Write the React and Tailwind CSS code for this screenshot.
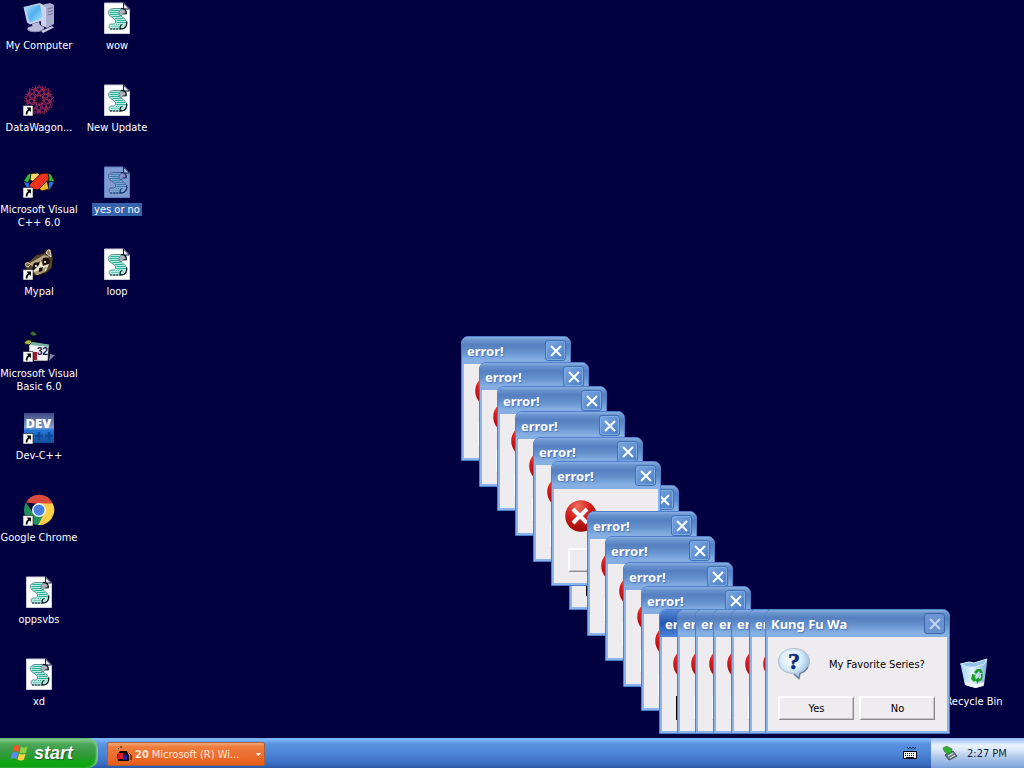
import React from "react";

function ScriptIcon({ selected }) {
  const paper = selected ? "#7f9bd0" : "#ffffff";
  const edge = selected ? "#5f7fc0" : "#c9ced8";
  const teal = selected ? "#3c79ab" : "#2fae98";
  const pale = selected ? "#83a8d6" : "#b4ece0";
  const ink = selected ? "#2c4a86" : "#3c7680";
  const shade = selected ? "#16306e" : "#061418";
  return (
    <svg viewBox="0 0 32 32" className="size-8 shrink-0" aria-hidden="true">
      <path d="M3.500 1H22.500l6 6v24.500h-25z" fill={paper} stroke={edge} />
      <path d="M22.500 1V7h6z" fill={selected ? "#a4bbe4" : "#e8ebf2"} stroke="#10183c" />
      <path d="M21 6.500H13C9 6.500 7 8.500 7.500 11.500c.6 3.500 6 4 7 7 .6 2-.5 3.500-2 3.500H10c-2.500 0-2.500 5 0 5H20c5 0 6.500-4 5.500-7.500C24.500 16 19 14.500 18.500 11.500z" fill={pale} stroke={ink} strokeWidth=".8" />
      <path d="M9.500 8.500H18M8.500 10.500H17.500M9 12.500H18M11.500 14.500H19.500M14 16.500H22M15.500 18.500H24M15.500 20.500H25" stroke={teal} strokeWidth="1.200" />
      <path d="M18 12.500C17.500 9 19 7 21.500 7c2.500 0 3.500 2 3.500 4.500-2-.5-4 .5-5 2.500z" fill={selected ? "#8493c4" : "#b0b0ba"} stroke={ink} strokeWidth=".8" />
      <path d="M20 6.300c4 0 5.600 2 5.300 5.500l-3 .2" fill="none" stroke={shade} strokeWidth="1.200" />
      <path d="M10.500 24.500h8M15 22.500h4" fill="none" stroke={teal} strokeDasharray="1 1" />
      <path d="M25.700 19.500c.6 4-1.500 7-5 7.500-2.500-.5-2-4.500.8-4.500" fill="none" stroke={shade} strokeWidth="1.200" />
      <path d="M9 27h11" stroke={shade} strokeDasharray="2 1" strokeWidth=".9" />
    </svg>
  );
}

function ShortcutArrow() {
  return (
    <g>
      <path d="M0 21.500h10V32H0z" fill="#fff" stroke="#111" strokeWidth=".6" />
      <path d="M3.500 23.500H8V28L6.500 26.600C5 27.600 4.500 28.600 4.500 30.500H2.800C2.600 28 3.500 26.400 5.200 25.200z" fill="#000" />
    </g>
  );
}

function ComputerIcon() {
  return (
    <svg viewBox="0 0 32 32" className="size-8 shrink-0" aria-hidden="true">
      <defs>
        <linearGradient id="screen" x1="0" y1="0" x2="1" y2="1">
          <stop offset="0" stopColor="#a4e2fc" />
          <stop offset=".5" stopColor="#4fb0ee" />
          <stop offset="1" stopColor="#b4e6ff" />
        </linearGradient>
      </defs>
      <path d="M18 3l9-2 4 2v19l-7 4-6-3z" fill="#a9acd0" />
      <path d="M18 3l5 2v20l-5-2z" fill="#d0d2ea" />
      <path d="M24.500 7l5.500-1.500M24.500 10l5.500-1.500M24.500 13l5.500-1.500" stroke="#6c7098" />
      <path d="M26 19h2" stroke="#70d070" strokeWidth="1.500" />
      <path d="M.5 5L17 1l3 2 1.500 15L7 22.500l-3-2z" fill="#c8d2ea" />
      <path d="M2.500 5.500L17 2.500l2.500 14L6.500 20.500z" fill="url(#screen)" />
      <path d="M9 22l7-2 1 3 4 2c1 3-5 5.500-10 5-6-.5-8.500-3-5-5l3.500-1z" fill="#b9bcdc" />
      <path d="M4.500 27.500c3 3 12 3 16-.5" fill="none" stroke="#8286b4" />
      <path d="M18 29l11-5 2 1.500L20 31z" fill="#c8cae2" />
    </svg>
  );
}

function DataWagonIcon() {
  return (
    <svg viewBox="0 0 32 32" className="size-8 shrink-0" aria-hidden="true">
      <g fill="none" stroke="#8e2350" strokeWidth=".9">
        {[0, 40, 80, 120, 160, 200, 240, 280, 320].map((angle) => (
          <g key={angle} transform={`rotate(${angle} 16 16)`}>
            <ellipse cx="16" cy="7.500" rx="5.500" ry="4" />
            <path d="M16 1l5 8-5 5-5-5z" />
            <path d="M9 3l7 5 7-5" />
          </g>
        ))}
      </g>
      <circle cx="16" cy="16" r="3" fill="#15042e" />
      <circle cx="16" cy="16" r="5" fill="none" stroke="#c03a4a" strokeDasharray="1 2" />
      <ShortcutArrow />
    </svg>
  );
}

function VisualCIcon() {
  return (
    <svg viewBox="0 0 32 32" className="size-8 shrink-0" aria-hidden="true">
      <g stroke="#050505" strokeWidth=".8">
        <path d="M.5 16L4 10l4 1-2 5 2 6-4 1z" fill="#2f6ae8" />
        <path d="M.5 15L5 8l5-1v5l-3 1-2 4z" fill="#30b43c" />
        <path d="M8 7.500l7-.5 2 2-6 7-4-2z" fill="#f8d469" />
        <path d="M31.500 15L28 8l-5-1v4l3 5-2 6 4 1z" fill="#32b83a" />
        <path d="M31.500 16L27 24l-5 1 3-5 1-5z" fill="#316ce4" />
        <path d="M24 15l2 8-7 2-4-3z" fill="#f2b832" />
        <path d="M6 19L18 7.500l7-.5 1 6-11 11-7-1z" fill="#ea321d" />
      </g>
      <ShortcutArrow />
    </svg>
  );
}

function MypalIcon() {
  return (
    <svg viewBox="0 0 32 32" className="size-8 shrink-0" aria-hidden="true">
      <path d="M2 14l5-1 6-6 8-2 3-4 4 1 2 8-1 10-6 5-9 3-9-3-3-7z" fill="#514231" stroke="#1c130d" />
      <path d="M23 5l2-3h2l1 7z" fill="#8b7360" stroke="#e8decb" />
      <path d="M3 18c-2-3 1-4 5-2l-3 3z" fill="#7a6349" stroke="#ead9b8" />
      <path d="M7 15l7-4 7-4 6 2-7 2-7 5-3 5z" fill="#b5a484" />
      <path d="M11 15c5-2 6 0 5 4l-4 4-4-1z" fill="#18110d" />
      <path d="M20 10c6-2 8 2 6 6l-6 1z" fill="#18110d" />
      <path d="M10 23l6-6 2-5 2 6 6-2-3 7-9 4z" fill="#eee4ca" />
      <path d="M11 24l8-3 5-3-3 6-7 3z" fill="#a89674" />
      <path d="M16 20l4-1-1 4-3 1z" fill="#060505" />
      <circle cx="13" cy="18" r="1" fill="#fff" />
      <circle cx="22" cy="14" r="1" fill="#fff" />
      <ShortcutArrow />
    </svg>
  );
}

function VisualBasicIcon() {
  return (
    <svg viewBox="0 0 32 32" className="size-8 shrink-0" aria-hidden="true">
      <path d="M7 3c3-3 6-1 7 2-3 2-6 1-7-2z" fill="#3c6c3c" stroke="#0b1510" />
      <path d="M1 13c2-4 7-4 8-1-2 4-5 3-8 1z" fill="#a9b04c" stroke="#161b08" />
      <path d="M10 8l3 4M7 15l4 3" stroke="#000" strokeWidth="2" />
      <path d="M6 15l3-3 17 3-1 16H11l-5-5z" fill="#f2f3fa" stroke="#000" strokeWidth=".6" />
      <path d="M9 12l17 2.500V17L7 15z" fill="#72b5a5" />
      <path d="M10 22h4v8h-4z" fill="#991e32" />
      <path d="M26 31l6-6-5-1z" fill="#7c83a1" />
      <text x="14" y="25" fontFamily="Liberation Sans, sans-serif" fontWeight="700" fontSize="10" fill="#10144c">32</text>
      <ShortcutArrow />
    </svg>
  );
}

function DevIcon() {
  return (
    <svg viewBox="0 0 32 32" className="size-8 shrink-0" aria-hidden="true">
      <defs>
        <linearGradient id="dev" x1="0" y1="0" x2="0" y2="1">
          <stop offset="0" stopColor="#3c4880" />
          <stop offset=".48" stopColor="#8a9cc8" />
          <stop offset=".58" stopColor="#2278d8" />
          <stop offset="1" stopColor="#114e9c" />
        </linearGradient>
      </defs>
      <path d="M1 1h30v30H1z" fill="url(#dev)" />
      <text x="2.500" y="15.500" fontFamily="Open Sans, sans-serif" fontWeight="800" fontSize="13" fill="#fff">DEV</text>
      <path d="M12 24h8m-4-4v8M22 24h8m-4-4v8" stroke="#0d4a9c" strokeWidth="2.500" />
      <ShortcutArrow />
    </svg>
  );
}

function ChromeIcon() {
  return (
    <svg viewBox="0 0 32 32" className="size-8 shrink-0" aria-hidden="true">
      <path d="M3 8.500A15 15 0 0 1 30 10H16z" fill="#dc4a3d" />
      <path d="M3 8.500A15 15 0 0 0 15 31L22 19 11 20z" fill="#23905c" />
      <path d="M29.700 9.500A15 15 0 0 1 15 31L22 18 18 9.500z" fill="#fcce45" />
      <circle cx="16" cy="16" r="7" fill="#f3f5f8" />
      <circle cx="16" cy="16" r="5.500" fill="#4a7fe0" />
      <ShortcutArrow />
    </svg>
  );
}

function RecycleIcon() {
  return (
    <svg viewBox="0 0 32 32" className="size-8 shrink-0" aria-hidden="true">
      <defs>
        <linearGradient id="bin" x1="0" y1="0" x2="1" y2="0">
          <stop offset="0" stopColor="#a4d0f0" />
          <stop offset=".45" stopColor="#e2f2fc" />
          <stop offset="1" stopColor="#7eb0e0" />
        </linearGradient>
      </defs>
      <path d="M2.500 6L11 4l5 1L29 1v4l-3 22-8 3-11-3z" fill="url(#bin)" />
      <path d="M2.500 6L11 4l5 1L29 1l-3 5-9 3-8 0z" fill="#8fc0ea" stroke="#d6eefc" />
      <path d="M6 23l10 3 10-2-.5 4-8 2-9-2.500z" fill="#f2f9fd" />
      <g fill="#1c9c28" transform="translate(-1 -1)">
        <path d="M17 15l3-3h4l2 4h-3l-1-2-3 3z" />
        <path d="M26 17l-1 6-4 2v2l-3-4 4-3v2l2-1v-4z" />
        <path d="M15 17l4 1-1 1 1 4-2 2-3-3 1-3z" />
      </g>
    </svg>
  );
}

function DesktopIcon({ label, icon, selected }) {
  return (
    <button type="button" className="flex h-[82px] w-[78px] shrink-0 flex-col items-center gap-[5px] pt-[2px] text-center text-[11px] leading-[13px] text-white">
      {icon}
      <span className={selected ? "bg-[#3562ab] px-[2px] whitespace-nowrap" : "whitespace-pre"}>{label}</span>
    </button>
  );
}

function ErrorIcon() {
  return (
    <svg viewBox="0 0 32 32" className="size-8 shrink-0" aria-hidden="true">
      <defs>
        <radialGradient id="err" cx=".4" cy=".2" r=".9">
          <stop offset="0" stopColor="#f0705c" />
          <stop offset=".45" stopColor="#d01c1c" />
          <stop offset="1" stopColor="#8c0808" />
        </radialGradient>
      </defs>
      <circle cx="16" cy="16" r="15.800" fill="url(#err)" />
      <path d="M8 9l14 14M22 9L8 23" stroke="#fff" strokeWidth="4" />
    </svg>
  );
}

function QuestionIcon() {
  return (
    <svg viewBox="0 0 32 32" className="size-8 shrink-0" aria-hidden="true">
      <defs>
        <radialGradient id="bubble" cx=".42" cy=".35" r=".65">
          <stop offset="0" stopColor="#fff" />
          <stop offset=".5" stopColor="#dceefa" />
          <stop offset="1" stopColor="#8cb4da" />
        </radialGradient>
      </defs>
      <path d="M16 .5c9 0 15.500 5.500 15.500 13 0 5.500-4 10-9.500 11.500L20.500 31l-6-5.500C6 25 .5 20 .5 13.500.5 6 7 .5 16 .5z" fill="url(#bubble)" stroke="#a3b4c8" strokeWidth=".8" />
      <path d="M30 19c-2 4-5 5.500-8 6.500l-1 5-5-4.500" fill="none" stroke="#6d7c90" strokeWidth="1.300" />
      <text x="10" y="21" fontFamily="Liberation Serif, serif" fontWeight="700" fontSize="24" fill="#0e2c80" stroke="#0e2c80" strokeWidth=".6">?</text>
    </svg>
  );
}

function CloseButton({ faded }) {
  return (
    <button
      type="button"
      aria-label="Close"
      className={
        faded
          ? "grid size-[21px] shrink-0 place-items-center rounded-[3px] border border-[#3d64a5] bg-linear-to-br from-[#7096d4] to-[#6690d0] text-[#c0d6f4]"
          : "grid size-[21px] shrink-0 place-items-center rounded-[3px] border border-[#3f70b4] bg-linear-to-br from-[#7aa6e0] to-[#4a7fc6] text-white shadow-[inset_0_0_0_1px_#7fabe4]"
      }
    >
      <svg viewBox="0 0 12 12" className="size-3" aria-hidden="true">
        <path d="M1 1l10 10M11 1L1 11" stroke="currentColor" strokeWidth="2" />
      </svg>
    </button>
  );
}

function DialogWindow({ title, x, y, width, active, faded, children }) {
  return (
    <section
      role="dialog"
      aria-label={title}
      style={{ left: x, top: y, width }}
      className="absolute flex h-[125px] flex-col overflow-hidden rounded-t-[7px] border border-[#4f7fcb] bg-[#8ab4ea] px-[2px] pb-[2px]"
    >
      <header
        className={
          active
            ? "-mx-[2px] flex h-[27px] shrink-0 items-center justify-between bg-linear-to-b from-[#5687d6] via-[#2657ae] to-[#4c86dc] pr-[4px] pl-[5px]"
            : "-mx-[2px] flex h-[27px] shrink-0 items-center justify-between bg-[linear-gradient(#8ab0e4_0px,#6a94d0_3px,#557fbf_8px,#6490cc_15px,#86b0e4_23px,#84aee2_27px)] pr-[4px] pl-[5px]"
        }
      >
        <h2 className="font-['Noto_Sans','Open_Sans',sans-serif] text-[13px] leading-4 font-bold whitespace-nowrap text-white [text-shadow:1px_1px_1px_#4a74b4]">{title}</h2>
        <CloseButton faded={faded} />
      </header>
      <div className="min-h-0 flex-1 bg-[#eeecee]">{children}</div>
    </section>
  );
}

function PushButton({ children, focused }) {
  return (
    <button
      type="button"
      className={
        focused
          ? "h-6 w-[76px] shrink-0 border border-black bg-[#eeecee] text-[11px] text-black"
          : "h-6 w-[76px] shrink-0 border-t-2 border-r border-b border-l-2 border-t-white border-r-[#8a8a8a] border-b-[#8a8a8a] border-l-white bg-[#eeecee] text-[11px] leading-[13px] text-black shadow-[inset_-1px_-1px_0_#c6c4c6]"
      }
    >
      {children}
    </button>
  );
}

function ErrorDialog({ x, y, active, focused }) {
  return (
    <DialogWindow title="error!" x={x} y={y} width={110} active={active}>
      <div className="flex flex-col gap-[16px] pt-[11px] pl-[11px]">
        <ErrorIcon />
        <div className="flex pl-[3px]">
          <PushButton focused={focused}>OK</PushButton>
        </div>
      </div>
    </DialogWindow>
  );
}

const errorDialogs = [
  { x: 461, y: 336 },
  { x: 479, y: 362 },
  { x: 497, y: 386 },
  { x: 515, y: 411 },
  { x: 533, y: 437 },
  { x: 569, y: 485, focused: true },
  { x: 551, y: 461 },
  { x: 587, y: 511 },
  { x: 605, y: 536 },
  { x: 623, y: 562 },
  { x: 641, y: 586 },
  { x: 659, y: 609, active: true, focused: true },
  { x: 677, y: 609 },
  { x: 695, y: 609 },
  { x: 713, y: 609 },
  { x: 731, y: 609 },
  { x: 749, y: 609 },
];

function StartFlag() {
  return (
    <svg viewBox="0 0 20 20" className="size-5 shrink-0" aria-hidden="true">
      <path d="M4 3c2-1.500 4-1.500 6 0L8.500 9C6.500 7.500 4.500 7.500 2.500 9z" fill="#ea5a2c" />
      <path d="M11 3.500c2 1.300 4 1.300 6.500 0L16 9.500c-2.500 1.300-4.500 1.300-6.500 0z" fill="#8cd044" />
      <path d="M2.200 10c2-1.500 4-1.500 6 0l-1.700 6C4.500 14.500 2.500 14.500.5 16z" fill="#5b8cf0" />
      <path d="M9.200 10.500c2 1.300 4 1.300 6.500 0l-1.700 6c-2.500 1.300-4.500 1.300-6.500 0z" fill="#fbd13c" />
    </svg>
  );
}

function Taskbar() {
  return (
    <footer className="flex h-[30px] shrink-0 bg-[linear-gradient(#74b2f6_0px,#78b4f6_2px,#5a92e0_6px,#4c84d6_16px,#3a6cc0_26px,#2c57a8_30px)]">
      <button type="button" className="flex w-[98px] shrink-0 items-center gap-[4px] rounded-r-[10px] bg-[linear-gradient(#5cae6c_0px,#7cc884_2px,#4ca858_6px,#3c9c48_12px,#2a9a30_19px,#12a814_24px,#0ca00e_30px)] pl-[10px] text-white shadow-[inset_-2px_0_2px_#7ec98a]">
        <StartFlag />
        <span className="font-['Liberation_Sans',sans-serif] text-[18px] leading-5 font-bold italic [text-shadow:1px_1px_1px_#1d5a22]">start</span>
      </button>
      <button type="button" className="mt-1 ml-[9px] flex h-6 w-[158px] shrink-0 items-center gap-[3px] rounded-[2px] border border-[#a8603c] bg-[linear-gradient(#f4a874_0px,#ee7c3c_4px,#ec7030_12px,#e65c18_22px)] pr-[3px] pl-[8px] text-[11px] leading-[13px] text-[#fde6d6]">
        <svg viewBox="0 0 16 16" className="size-4 shrink-0" aria-hidden="true">
          <path d="M5 0v2M2 2l1 1" stroke="#201008" />
          <path d="M1 9l3-4h7l2 5v5H2z" fill="#120808" />
          <path d="M2 7h5v6H2z" fill="#d8202c" />
          <path d="M7 9h4v5H7z" fill="#2820a0" />
          <path d="M13 7l2 2v5" stroke="#111" fill="none" />
        </svg>
        <b>20</b>
        <span className="min-w-0 flex-1 text-left whitespace-nowrap">Microsoft (R) Wi...</span>
        <svg viewBox="0 0 5 3" className="h-[3px] w-[5px] shrink-0" aria-hidden="true">
          <path d="M0 0h5L2.500 3z" fill="#fff" />
        </svg>
      </button>
      <div className="ml-auto flex items-center pr-[14px]">
        <svg viewBox="0 0 14 14" className="size-[14px]" aria-hidden="true">
          <path d="M4 1.500l1.500 1L7 1.500l1.500 1 1.500-1 1.500 1L13 1.500" fill="none" stroke="#1c2840" />
          <path d="M.5 5.500h13v7H.5z" fill="#fff" stroke="#000" />
          <path d="M2 7.500h10M2 9.500h10" stroke="#000" strokeDasharray="1 1" />
          <path d="M3 11.500h8" stroke="#000" />
        </svg>
      </div>
      <div className="flex w-[93px] shrink-0 items-center gap-[9px] bg-[linear-gradient(#8fbcf6_0px,#b4d0f6_3px,#e9f1fc_7px,#dce8f8_12px,#b0c8ea_19px,#8fb1e2_26px,#7c9fd6_30px)] pl-[11px] text-[11px] leading-[13px] text-[#101c3c]">
        <svg viewBox="0 0 16 16" className="size-4 shrink-0" aria-hidden="true">
          <path d="M3 10l8-4 4 5-8 4z" fill="#75808c" stroke="#3c4854" />
          <path d="M6 11l5-3M8 13l5-3" stroke="#e8eef4" />
          <path d="M1 3l4-2 1 1 4 2-1 4-4 1-3-3z" fill="#37ae35" stroke="#1c7a24" strokeWidth=".6" />
        </svg>
        <time>2:27 PM</time>
      </div>
    </footer>
  );
}

export default function App() {
  return (
    <div className="flex min-h-screen flex-col overflow-hidden bg-[#000040] font-['DejaVu_Sans_Condensed','Noto_Sans',sans-serif]">
      <main className="relative flex flex-1">
        <div className="flex flex-col">
          <DesktopIcon label="My Computer" icon={<ComputerIcon />} />
          <DesktopIcon label="DataWagon..." icon={<DataWagonIcon />} />
          <DesktopIcon label={"Microsoft Visual\nC++ 6.0"} icon={<VisualCIcon />} />
          <DesktopIcon label="Mypal" icon={<MypalIcon />} />
          <DesktopIcon label={"Microsoft Visual\nBasic 6.0"} icon={<VisualBasicIcon />} />
          <DesktopIcon label="Dev-C++" icon={<DevIcon />} />
          <DesktopIcon label="Google Chrome" icon={<ChromeIcon />} />
          <DesktopIcon label="oppsvbs" icon={<ScriptIcon />} />
          <DesktopIcon label="xd" icon={<ScriptIcon />} />
        </div>
        <div className="flex flex-col">
          <DesktopIcon label="wow" icon={<ScriptIcon />} />
          <DesktopIcon label="New Update" icon={<ScriptIcon />} />
          <DesktopIcon label="yes or no" icon={<ScriptIcon selected />} selected />
          <DesktopIcon label="loop" icon={<ScriptIcon />} />
        </div>
        <div className="mr-[11px] ml-auto self-end">
          <DesktopIcon label="Recycle Bin" icon={<RecycleIcon />} />
        </div>

        {errorDialogs.map((dialog) => (
          <ErrorDialog key={dialog.x} {...dialog} />
        ))}

        <DialogWindow title="Kung Fu Wa" x={765} y={609} width={185} faded>
          <div className="flex flex-col gap-[16px] px-[10px] pt-[11px]">
            <div className="flex items-center gap-[19px] text-[11px] leading-[13px] text-black">
              <QuestionIcon />
              <p className="whitespace-nowrap">My Favorite Series?</p>
            </div>
            <div className="flex gap-[5px]">
              <PushButton>Yes</PushButton>
              <PushButton>No</PushButton>
            </div>
          </div>
        </DialogWindow>
      </main>
      <Taskbar />
    </div>
  );
}
